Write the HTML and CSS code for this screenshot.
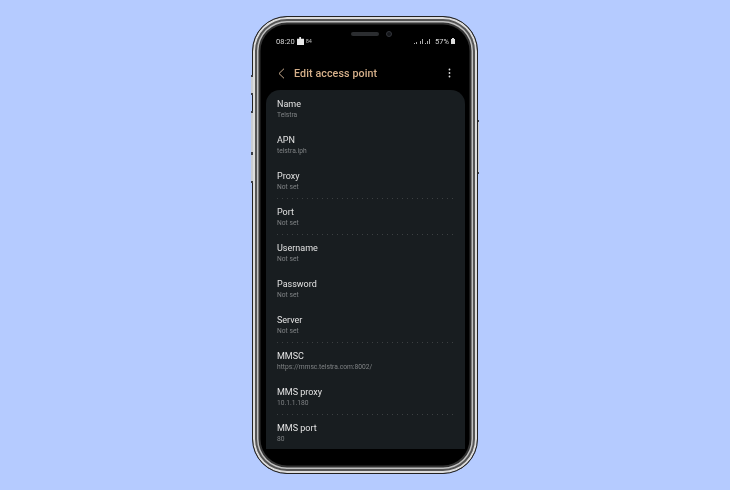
FILE: index.html
```html
<!DOCTYPE html>
<html lang="en">
<head>
<meta charset="utf-8">
<title>Edit access point</title>
<link rel="stylesheet" href="styles.css">
</head>
<body>
<div class="phone">
  <span class="btn btn-l1"></span>
  <span class="btn btn-l2"></span>
  <span class="btn btn-l3"></span>
  <span class="btn btn-r"></span>
  <div class="shell">
    <div class="screen">
      <div class="notch"><span class="speaker"></span><span class="camera"></span></div>
      <div class="status">
        <div class="status-left">
          <span class="time">08:20</span>
          <svg class="puzzle" width="7" height="8" viewBox="0 0 8 9"><path d="M0 2h2.6V.6a1 .9 0 0 1 2 0V2H8v7H0z" fill="#e8e8e8"/></svg>
          <span class="tiny">84</span>
        </div>
        <div class="status-right">
          <svg class="signal" width="16" height="6" viewBox="0 0 16 6"><path d="M0 5h1v1H0zM2 4h1v2H2zM6 3h1v3H6zM8 1h1v5H8zM11 5h1v1h-1zM13 3h1v3h-1zM15 1h1v5h-1z" fill="#aaa"/></svg>
          <span class="pct">57%</span>
          <svg class="battery" width="4" height="6" viewBox="0 0 4 6"><path d="M1 0h2v1h1v5H0V1h1z" fill="#ddd"/></svg>
        </div>
      </div>
      <header class="bar">
        <svg class="back" width="7" height="11" viewBox="0 0 7 11"><path d="M6 .7 1 5.5l5 4.8" fill="none" stroke="#c9ad90" stroke-width="1"/></svg>
        <h1 class="title">Edit access point</h1>
        <svg class="more" width="3" height="10" viewBox="0 0 3 10"><circle cx="1.5" cy="1.5" r=".9" fill="#ddd"/><circle cx="1.5" cy="5" r=".9" fill="#ddd"/><circle cx="1.5" cy="8.5" r=".9" fill="#ddd"/></svg>
      </header>
      <main class="card">
        <div class="row"><div class="label">Name</div><div class="value">Telstra</div></div>
        <div class="row"><div class="label">APN</div><div class="value">telstra.iph</div></div>
        <div class="row sep"><div class="label">Proxy</div><div class="value">Not set</div></div>
        <div class="row sep"><div class="label">Port</div><div class="value">Not set</div></div>
        <div class="row"><div class="label">Username</div><div class="value">Not set</div></div>
        <div class="row"><div class="label">Password</div><div class="value">Not set</div></div>
        <div class="row sep"><div class="label">Server</div><div class="value">Not set</div></div>
        <div class="row"><div class="label">MMSC</div><div class="value">https://mmsc.telstra.com:8002/</div></div>
        <div class="row sep"><div class="label">MMS proxy</div><div class="value">10.1.1.180</div></div>
        <div class="row"><div class="label">MMS port</div><div class="value">80</div></div>
      </main>
    </div>
  </div>
</div>
</body>
</html>
```
FILE: styles.css
```css
* { box-sizing: border-box; margin: 0; padding: 0; }
html, body { width: 730px; height: 490px; overflow: hidden; }
body {
  background: #b5cbff;
  display: flex;
  align-items: center;
  justify-content: center;
  font-family: Roboto, "Noto Sans", sans-serif;
}
.phone { position: relative; width: 226px; height: 458px; filter: blur(.3px); }
.btn { position: absolute; width: 1.5px; background: #c9ccd2; border-top: 2px solid #3a3d44; border-bottom: 2px solid #3a3d44; }
.btn-l1 { left: -1px; top: 59px; height: 20px; }
.btn-l2 { left: -1px; top: 95px; height: 43px; }
.btn-l3 { left: -1px; top: 137px; height: 30px; }
.btn-r { right: -1px; top: 104px; height: 54px; }
.shell {
  width: 100%;
  height: 100%;
  padding: 9px;
  border-radius: 35px;
  background: #000;
  border: 1px solid #222;
  box-shadow: inset 0 0 0 2px #dcdcdc, inset 0 0 0 4px #555, inset 0 0 0 5.5px #c0c0c0, inset 0 0 0 7.5px #333;
}
.screen {
  position: relative;
  height: 100%;
  background: #000;
  border-radius: 27px;
  padding: 0 4px;
  display: flex;
  flex-direction: column;
}
.notch { position: absolute; top: 5px; left: 0; right: 0; display: flex; justify-content: center; align-items: center; gap: 7px; padding-left: 13px; }
.speaker { width: 28px; height: 4px; border-radius: 2px; background: #2b2d30; }
.camera { width: 6px; height: 6px; border-radius: 50%; background: #14161a; border: 1px solid #33353b; }
.status {
  height: 14px;
  margin-top: 8px;
  padding: 0 9px 0 10px;
  display: flex;
  justify-content: space-between;
  align-items: center;
  color: #d8d8d8;
}
.status-left, .status-right { display: flex; align-items: center; gap: 2px; }
.signal { margin-right: 3px; }
.time { font-size: 7.5px; }
.tiny { font-size: 5.5px; color: #bbb; }
.pct { font-size: 7.5px; }
.bar { height: 26px; margin-top: 12px; padding: 0 13px 0 12px; display: flex; align-items: center; }
.title { font-size: 10.7px; font-weight: 500; color: #d6b08a; margin-left: 9px; flex: 1; letter-spacing: .1px; }
.card { width: 199px; height: 359px; margin-top: 4px; padding-top: 1px; background: #181d20; border-radius: 14px 14px 0 0; overflow: hidden; }
.row { height: 36px; margin: 0 11px 0 9px; padding: 8px 2px 0; }
.sep { background: radial-gradient(circle, #3c4042 .5px, transparent .7px) left bottom / 5px 1px repeat-x; }
.label { font-size: 9px; line-height: 11px; color: #e2e2e2; }
.value { font-size: 6.7px; line-height: 9px; color: #7f8284; margin-top: 1px; }
```
